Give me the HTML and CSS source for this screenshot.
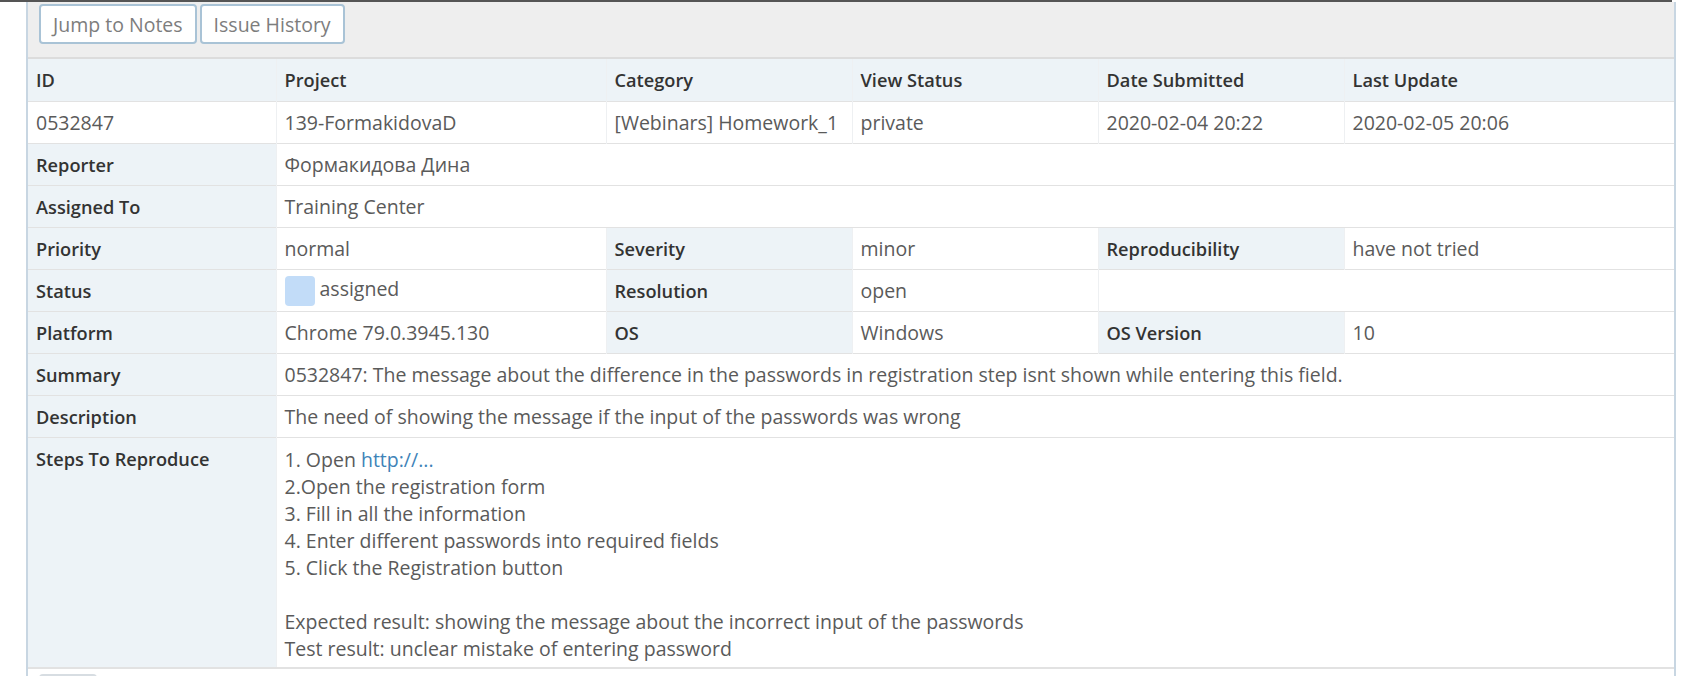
FILE: index.html
```html
<!DOCTYPE html>
<html lang="en">
<head>
  <meta charset="UTF-8" />
  <title>0532847 - View Issue Details</title>
  <link rel="stylesheet" href="styles.css">
</head>
<body>
  <div class="topline"></div>

  <div class="widget">
    <div class="toolbar">
      <a class="btn" href="#notes">Jump to Notes</a>
      <a class="btn" href="#history">Issue History</a>
    </div>

    <table class="details">
      <colgroup>
        <col class="c1"><col class="c2"><col class="c3"><col class="c4"><col class="c5"><col class="c6">
      </colgroup>
      <thead>
        <tr>
          <th>ID</th>
          <th>Project</th>
          <th>Category</th>
          <th>View Status</th>
          <th>Date Submitted</th>
          <th>Last Update</th>
        </tr>
      </thead>
      <tbody>
        <tr class="first">
          <td>0532847</td>
          <td>139-FormakidovaD</td>
          <td>[Webinars] Homework_1</td>
          <td>private</td>
          <td>2020-02-04 20:22</td>
          <td>2020-02-05 20:06</td>
        </tr>
        <tr>
          <th class="label">Reporter</th>
          <td colspan="5">Формакидова Дина</td>
        </tr>
        <tr>
          <th class="label">Assigned To</th>
          <td colspan="5">Training Center</td>
        </tr>
        <tr>
          <th class="label">Priority</th>
          <td>normal</td>
          <th class="label">Severity</th>
          <td>minor</td>
          <th class="label">Reproducibility</th>
          <td>have not tried</td>
        </tr>
        <tr>
          <th class="label">Status</th>
          <td><span class="swatch"></span>assigned</td>
          <th class="label">Resolution</th>
          <td>open</td>
          <td colspan="2"></td>
        </tr>
        <tr>
          <th class="label">Platform</th>
          <td>Chrome 79.0.3945.130</td>
          <th class="label">OS</th>
          <td>Windows</td>
          <th class="label">OS Version</th>
          <td>10</td>
        </tr>
        <tr>
          <th class="label">Summary</th>
          <td colspan="5">0532847: The message about the difference in the passwords in registration step isnt shown while entering this field.</td>
        </tr>
        <tr>
          <th class="label">Description</th>
          <td colspan="5">The need of showing the message if the input of the passwords was wrong</td>
        </tr>
        <tr class="tall">
          <th class="label">Steps To Reproduce</th>
          <td colspan="5">1. Open <a href="#">http://...</a><br>2.Open the registration form<br>3. Fill in all the information<br>4. Enter different passwords into required fields<br>5. Click the Registration button<br><br>Expected result: showing the message about the incorrect input of the passwords<br>Test result: unclear mistake of entering password</td>
        </tr>
      </tbody>
    </table>

    <div class="footer">
      <span class="btn small"></span>
    </div>
  </div>
</body>
</html>
```

FILE: styles.css
```css
html, body {
  margin: 0;
  padding: 0;
  background: #fff;
  overflow: hidden;
}
body {
  font-family: "Open Sans", "Noto Sans", sans-serif;
  font-size: 19.5px;
  color: #5a5a5a;
}
.topline {
  width: 1672px;
  height: 2px;
  background: #555;
}
.widget {
  margin-left: 26px;
  width: 1646px;
  border-left: 2px solid #c8d6e2;
  border-right: 2px solid #c8d6e2;
}
.toolbar {
  display: flex;
  gap: 3px;
  height: 53px;
  padding: 2px 0 0 11px;
  background: #eeeeee;
  border-bottom: 2px solid #dcdcdc;
}
.btn {
  display: inline-flex;
  align-items: center;
  height: 36px;
  padding: 0 12px;
  border: 2px solid #a9c3d6;
  border-radius: 4px;
  background: #fff;
  color: #7d7d7d;
  font-size: 19.5px;
  text-decoration: none;
}
.details {
  width: 100%;
  border-collapse: collapse;
  table-layout: fixed;
}
.c1 { width: 248px; }
.c2 { width: 330px; }
.c3 { width: 246px; }
.c4 { width: 246px; }
.c5 { width: 246px; }
.c6 { width: auto; }
.details th, .details td {
  height: 41px;
  padding: 0 8px;
  text-align: left;
  vertical-align: middle;
  border-top: 1px solid #e2e2e2;
  border-left: 1px solid #eef0f2;
  white-space: nowrap;
}
.details th:first-child, .details td:first-child {
  border-left: none;
}
.details thead th {
  height: 42px;
  border-top: none;
  background: #edf3f7;
  color: #333;
  font-size: 18.2px;
  font-weight: 600;
}
.details th.label {
  background: #edf3f7;
  color: #333;
  font-size: 18.2px;
  font-weight: 600;
}
.details td {
  background: #fff;
}
.details tr.tall th, .details tr.tall td {
  height: auto;
  vertical-align: top;
  padding-top: 8px;
  padding-bottom: 5px;
  line-height: 27px;
  border-bottom: 2px solid #e2e2e2;
}
.details a {
  color: #3e83b8;
  text-decoration: none;
}
.swatch {
  display: inline-block;
  width: 30px;
  height: 30px;
  margin-right: 5px;
  vertical-align: middle;
  border-radius: 4px;
  background: #c2dcf8;
}
.footer {
  padding: 5px 0 0 11px;
  height: 40px;
}
.btn.small {
  width: 34px;
  height: 28px;
  padding: 0 10px;
  border-color: #d7dde2;
}
```
